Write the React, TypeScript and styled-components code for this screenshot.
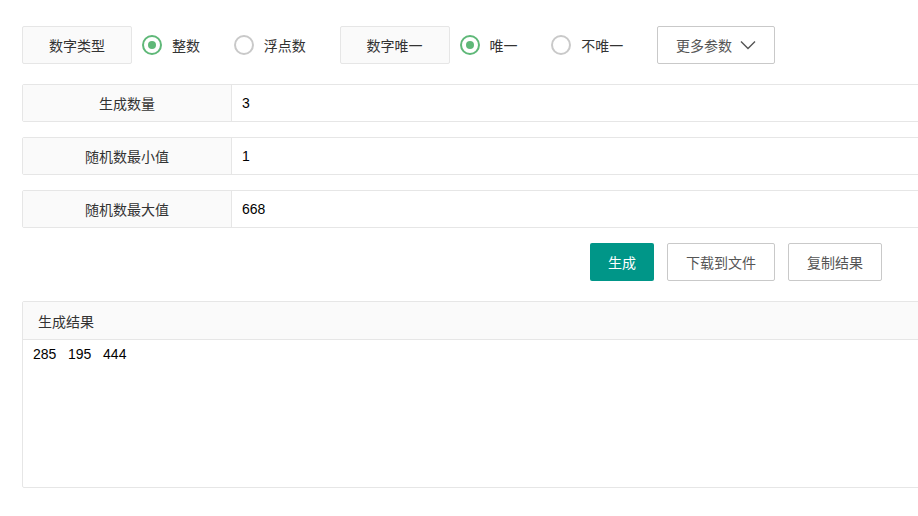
import * as React from "react";
import styled, { createGlobalStyle } from "styled-components";

const GlobalStyle = createGlobalStyle`
  html, body {
    margin: 0;
    padding: 0;
    background: #fff;
    overflow: hidden;
  }
  body {
    font-family: "Liberation Sans", "Noto Sans CJK SC", sans-serif;
    font-size: 14px;
    color: #333;
  }
`;

const Page = styled.div`
  width: 940px;
  padding: 26px 0 0 22px;
  display: flex;
  flex-direction: column;
`;

const Toolbar = styled.div`
  display: flex;
  align-items: center;
  gap: 10px;
  height: 38px;
  margin-bottom: 20px;
`;

const Tag = styled.div`
  box-sizing: border-box;
  width: 110px;
  height: 38px;
  display: flex;
  align-items: center;
  justify-content: center;
  background: #fafafa;
  border: 1px solid #e6e6e6;
  border-radius: 2px;
  color: #333;
`;

const RadioItem = styled.label`
  display: flex;
  align-items: center;
  gap: 10px;
  padding-right: 23.75px;
  cursor: pointer;
  color: #333;
`;

const RadioCircle = styled.span<{ $checked: boolean }>`
  box-sizing: border-box;
  width: 20px;
  height: 20px;
  border-radius: 50%;
  border: 2px solid ${p => (p.$checked ? "#5fb878" : "#c9c9c9")};
  display: flex;
  align-items: center;
  justify-content: center;
  &::after {
    content: "";
    display: ${p => (p.$checked ? "block" : "none")};
    width: 8px;
    height: 8px;
    border-radius: 50%;
    background: #5fb878;
  }
`;

const Button = styled.button<{ $primary?: boolean }>`
  box-sizing: border-box;
  height: 38px;
  padding: 0 18px;
  border-radius: 2px;
  font-family: inherit;
  font-size: 14px;
  display: inline-flex;
  align-items: center;
  gap: 8px;
  cursor: pointer;
  border: ${p => (p.$primary ? "none" : "1px solid #c9c9c9")};
  background: ${p => (p.$primary ? "#009688" : "#fff")};
  color: ${p => (p.$primary ? "#fff" : "#555")};
`;

const Field = styled.div`
  box-sizing: border-box;
  display: flex;
  height: 38px;
  width: 100%;
  border: 1px solid #e6e6e6;
  border-radius: 2px;
  margin-bottom: 15px;
`;

const FieldLabel = styled.div`
  width: 208px;
  flex: none;
  display: flex;
  align-items: center;
  justify-content: center;
  background: #fafafa;
  border-right: 1px solid #e6e6e6;
  color: #333;
`;

const FieldValue = styled.div`
  flex: 1;
  display: flex;
  align-items: center;
  padding-left: 10px;
  color: #000;
`;

const Actions = styled.div`
  display: flex;
  justify-content: flex-end;
  gap: 13px;
  padding-right: 80px;
  margin-bottom: 20px;
`;

const Result = styled.div`
  box-sizing: border-box;
  width: 100%;
  border: 1px solid #e6e6e6;
  border-radius: 2px;
`;

const ResultHeader = styled.div`
  height: 37px;
  display: flex;
  align-items: center;
  padding-left: 15px;
  background: #fafafa;
  border-bottom: 1px solid #e6e6e6;
  color: #333;
`;

const ResultBody = styled.div`
  height: 147px;
  padding: 6px 10px;
  box-sizing: border-box;
  color: #000;
  white-space: pre;
`;

const Radio = ({ label, checked }: { label: string; checked?: boolean }) => (
  <RadioItem>
    <RadioCircle $checked={!!checked} />
    {label}
  </RadioItem>
);

const Chevron = () => (
  <svg width="16" height="10" viewBox="0 0 16 10" fill="none">
    <path d="M1 1.5 L8 8.5 L15 1.5" stroke="#555" strokeWidth="1.4" />
  </svg>
);

const fields = [
  { label: "生成数量", value: "3" },
  { label: "随机数最小值", value: "1" },
  { label: "随机数最大值", value: "668" }
];

export default function App() {
  return (
    <Page>
      <GlobalStyle />
      <Toolbar>
        <Tag>数字类型</Tag>
        <Radio label="整数" checked />
        <Radio label="浮点数" />
        <Tag>数字唯一</Tag>
        <Radio label="唯一" checked />
        <Radio label="不唯一" />
        <Button>
          更多参数
          <Chevron />
        </Button>
      </Toolbar>
      {fields.map(f => (
        <Field key={f.label}>
          <FieldLabel>{f.label}</FieldLabel>
          <FieldValue>{f.value}</FieldValue>
        </Field>
      ))}
      <Actions>
        <Button $primary>生成</Button>
        <Button>下载到文件</Button>
        <Button>复制结果</Button>
      </Actions>
      <Result>
        <ResultHeader>生成结果</ResultHeader>
        <ResultBody>{"285   195   444"}</ResultBody>
      </Result>
    </Page>
  );
}
